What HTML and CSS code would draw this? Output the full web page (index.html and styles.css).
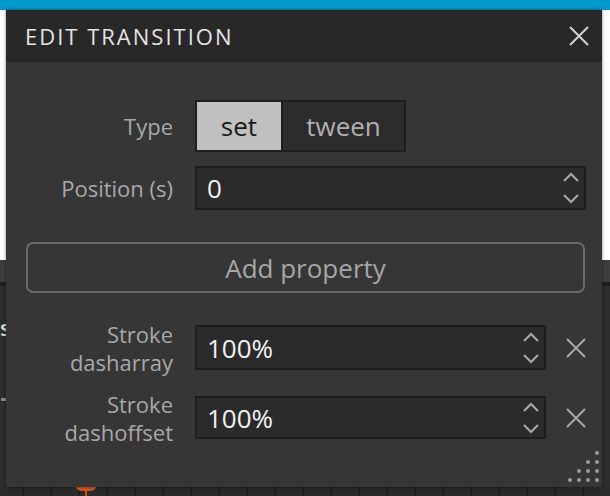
FILE: index.html
```html
<!DOCTYPE html>
<html>
<head>
<meta charset="utf-8">
<link rel="stylesheet" href="styles.css">
</head>
<body>
<div class="app">
  <div class="topbar"></div>
  <div class="canvas"></div>
  <div class="toolbar"></div>
  <div class="divider"></div>
  <div class="panel">
    <span class="panel-letter">s</span>
    <span class="panel-tick"></span>
  </div>
  <div class="timeline">
    <span class="tl-cell"></span><span class="tl-cell"></span><span class="tl-cell"></span><span class="tl-cell"></span><span class="tl-cell"></span><span class="tl-cell"></span><span class="tl-cell"></span><span class="tl-cell"></span><span class="tl-cell"></span><span class="tl-cell"></span><span class="tl-cell"></span><span class="tl-cell"></span><span class="tl-cell"></span><span class="tl-cell"></span><span class="tl-cell"></span><span class="tl-cell"></span><span class="tl-cell"></span><span class="tl-cell"></span><span class="tl-cell"></span><span class="tl-cell"></span><span class="tl-cell"></span><span class="tl-cell"></span>
  </div>
  <span class="playhead"></span>
</div>

<div class="dialog">
  <div class="dialog-header">
    <span class="dialog-title">EDIT TRANSITION</span>
    <svg class="close" width="22" height="22" viewBox="0 0 22 22"><path d="M2 2L20 20M20 2L2 20" stroke="#d2d2d2" stroke-width="2" fill="none"/></svg>
  </div>
  <div class="dialog-body">
    <div class="form">
      <label class="label">Type</label>
      <div class="segmented">
        <span class="seg seg-active">set</span>
        <span class="seg">tween</span>
      </div>
      <label class="label">Position (s)</label>
      <div class="input">
        <span class="value">0</span>
        <svg class="spin" width="18" height="36" viewBox="0 0 18 36"><path d="M2 11L9 4L16 11M2 25L9 32L16 25" stroke="#a8a8a8" stroke-width="2" fill="none"/></svg>
      </div>
    </div>

    <button class="add-btn">Add property</button>

    <div class="props">
      <label class="label label-2">Stroke<br>dasharray</label>
      <div class="input">
        <span class="value">100%</span>
        <svg class="spin" width="18" height="36" viewBox="0 0 18 36"><path d="M2 11L9 4L16 11M2 25L9 32L16 25" stroke="#a8a8a8" stroke-width="2" fill="none"/></svg>
      </div>
      <svg class="remove" width="20" height="20" viewBox="0 0 20 20"><path d="M1 1L19 19M19 1L1 19" stroke="#a8a8a8" stroke-width="2" fill="none"/></svg>

      <label class="label label-2">Stroke<br>dashoffset</label>
      <div class="input">
        <span class="value">100%</span>
        <svg class="spin" width="18" height="36" viewBox="0 0 18 36"><path d="M2 11L9 4L16 11M2 25L9 32L16 25" stroke="#a8a8a8" stroke-width="2" fill="none"/></svg>
      </div>
      <svg class="remove" width="20" height="20" viewBox="0 0 20 20"><path d="M1 1L19 19M19 1L1 19" stroke="#a8a8a8" stroke-width="2" fill="none"/></svg>
    </div>

    <svg class="resize" width="32" height="32" viewBox="0 0 32 32">
      <g fill="#9c9c9c">
        <circle cx="29" cy="2" r="2"/>
        <circle cx="20" cy="11" r="2"/><circle cx="29" cy="11" r="2"/>
        <circle cx="11" cy="20" r="2"/><circle cx="20" cy="20" r="2"/><circle cx="29" cy="20" r="2"/>
        <circle cx="2" cy="29" r="2"/><circle cx="11" cy="29" r="2"/><circle cx="20" cy="29" r="2"/><circle cx="29" cy="29" r="2"/>
      </g>
    </svg>
  </div>
</div>
</body>
</html>
```

FILE: styles.css
```css
html, body {
  margin: 0;
  padding: 0;
  width: 610px;
  height: 496px;
  overflow: hidden;
  font-family: "Open Sans", "Liberation Sans", sans-serif;
}

.app {
  position: relative;
  display: flex;
  flex-direction: column;
  width: 610px;
  height: 496px;
  background: #2a2a2a;
}

.topbar {
  height: 10px;
  background: #0099cc;
}

.canvas {
  height: 250px;
  background: #ffffff;
}

.toolbar {
  height: 22px;
  background: #3d3d3d;
}

.divider {
  height: 4px;
  background: #1c1c1c;
}

.panel {
  position: relative;
  flex: 1;
  background: #2c2c2c;
}

.panel-letter {
  position: absolute;
  left: 0;
  top: 26px;
  color: #d8d8d8;
  font-size: 22px;
  font-weight: 600;
}

.panel-tick {
  position: absolute;
  left: 1px;
  top: 112px;
  width: 5px;
  height: 3px;
  background: #8a8a8a;
}

.timeline {
  display: flex;
  height: 9px;
  margin-left: -4px;
  background: #2a2a2a;
}

.tl-cell {
  flex: none;
  width: 26px;
  border-right: 2px solid #1e1e1e;
}

.playhead {
  position: absolute;
  left: 76px;
  top: 486px;
  width: 20px;
  height: 5px;
  background: #d2541c;
  border-radius: 0 0 6px 6px;
}

.playhead::after {
  content: "";
  position: absolute;
  left: 9px;
  top: 4px;
  width: 2px;
  height: 8px;
  background: #d2541c;
}

.dialog {
  position: absolute;
  left: 6px;
  top: 10px;
  width: 596px;
  height: 477px;
  display: flex;
  flex-direction: column;
  background: #363636;
  box-shadow: 0 0 3px rgba(0, 0, 0, 0.5);
}

.dialog-header {
  height: 52px;
  flex: none;
  display: flex;
  align-items: center;
  justify-content: space-between;
  padding: 0 12px 0 19px;
  background: #282828;
}

.dialog-title {
  color: #e4e4e4;
  font-size: 22px;
  letter-spacing: 2px;
}

.close {
  display: block;
}

.dialog-body {
  position: relative;
  flex: 1;
  padding: 38px 16px 0 20px;
}

.form {
  display: grid;
  grid-template-columns: 147px 391px;
  grid-template-rows: 52px 44px;
  column-gap: 22px;
  row-gap: 14px;
  align-items: center;
}

.label {
  text-align: right;
  color: #a8a8a8;
  font-size: 22px;
}

.label-2 {
  line-height: 28px;
}

.segmented {
  display: flex;
  width: 211px;
  height: 52px;
  box-sizing: border-box;
  border: 2px solid #1f1f1f;
  background: #1f1f1f;
  gap: 2px;
}

.seg {
  display: flex;
  align-items: center;
  justify-content: center;
  width: 121px;
  background: #2c2c2c;
  color: #b0b0b0;
  font-size: 26px;
}

.seg-active {
  width: 84px;
  background: #c0c0c0;
  color: #1a1a1a;
}

.input {
  display: flex;
  align-items: center;
  justify-content: space-between;
  height: 100%;
  box-sizing: border-box;
  padding: 0 4px 0 10px;
  background: #2b2b2b;
  border: 2px solid #1e1e1e;
}

.value {
  color: #f2f2f2;
  font-size: 26px;
}

.spin {
  display: block;
}

.add-btn {
  display: block;
  width: 559px;
  height: 51px;
  margin: 32px 0 0 0;
  padding: 0;
  background: transparent;
  border: 2px solid #6a6a6a;
  border-radius: 7px;
  color: #a6a6a6;
  font-family: "Open Sans", "Liberation Sans", sans-serif;
  font-size: 26px;
}

.props {
  display: grid;
  grid-template-columns: 147px 351px 40px;
  grid-template-rows: 45px 43px;
  column-gap: 22px;
  row-gap: 26px;
  align-items: center;
  margin-top: 32px;
}

.props .input {
  height: 100%;
}

.remove {
  display: block;
  margin-left: -2px;
}

.resize {
  position: absolute;
  right: 2px;
  bottom: 4px;
}
```
